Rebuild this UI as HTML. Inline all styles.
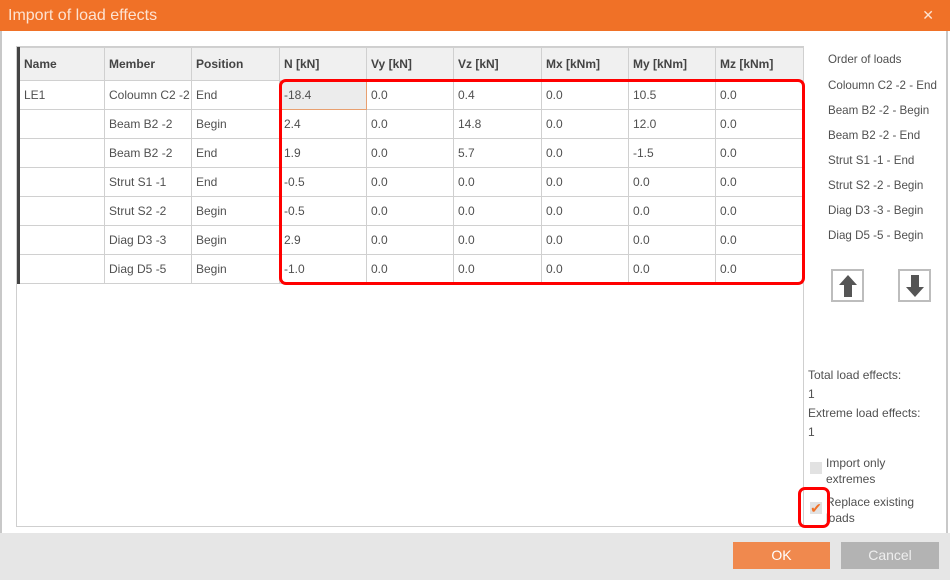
<!DOCTYPE html>
<html><head><style>
*{margin:0;padding:0;box-sizing:border-box}
body{width:950px;height:580px;position:relative;background:#fff;font-family:"Liberation Sans",sans-serif;font-size:12px;color:#505050;overflow:hidden}
.a{position:absolute}
.title{left:0;top:0;width:950px;height:31px;background:#F07127;color:#fde3d2;font-size:16px;line-height:31px;padding-left:8px}
.close{right:16px;top:7px;color:#fde3d2;font-size:14px}
.grid{left:16px;top:46px;width:788px;height:481px;border:1px solid #cfcfcf}
table{position:absolute;left:17px;top:47px;border-collapse:collapse;table-layout:fixed}
td,th{border:1px solid #d0d0d0;height:29px;padding-left:4px;text-align:left;white-space:nowrap;overflow:hidden;font-weight:normal}
th{background:#f0f0f0;font-weight:bold;height:33px;color:#444}
td.first,th.first{border-left:3px solid #444}
.sel{background:#ececec;outline:1px solid #e8a070;outline-offset:-1px}
.red{border:3px solid #f00;border-radius:7px}
.side div{position:absolute;left:828px;font-size:11.6px}
.btn{border:2px solid #bdbdbd;width:33px;height:33px;display:flex;align-items:center;justify-content:center;background:#fff}
.footer{left:0;top:533px;width:950px;height:47px;background:#e6e6e6}
</style></head><body>
<div class="a title">Import of load effects</div>
<div class="a close">✕</div>
<div class="a" style="left:0;top:31px;width:2px;height:502px;background:#c8c8c8"></div>
<div class="a" style="left:946px;top:31px;width:2px;height:502px;background:#c8c8c8"></div>
<div class="a grid"></div>
<table>
<colgroup><col style="width:86px"><col style="width:87px"><col style="width:88px"><col style="width:87px"><col style="width:87px"><col style="width:88px"><col style="width:87px"><col style="width:87px"><col style="width:88px"></colgroup>
<tr><th class="first">Name</th><th>Member</th><th>Position</th><th>N [kN]</th><th>Vy [kN]</th><th>Vz [kN]</th><th>Mx [kNm]</th><th>My [kNm]</th><th>Mz [kNm]</th></tr>
<tr><td class="first">LE1</td><td>Coloumn C2 -2</td><td>End</td><td class="sel">-18.4</td><td>0.0</td><td>0.4</td><td>0.0</td><td>10.5</td><td>0.0</td></tr>
<tr><td class="first"></td><td>Beam B2 -2</td><td>Begin</td><td>2.4</td><td>0.0</td><td>14.8</td><td>0.0</td><td>12.0</td><td>0.0</td></tr>
<tr><td class="first"></td><td>Beam B2 -2</td><td>End</td><td>1.9</td><td>0.0</td><td>5.7</td><td>0.0</td><td>-1.5</td><td>0.0</td></tr>
<tr><td class="first"></td><td>Strut S1 -1</td><td>End</td><td>-0.5</td><td>0.0</td><td>0.0</td><td>0.0</td><td>0.0</td><td>0.0</td></tr>
<tr><td class="first"></td><td>Strut S2 -2</td><td>Begin</td><td>-0.5</td><td>0.0</td><td>0.0</td><td>0.0</td><td>0.0</td><td>0.0</td></tr>
<tr><td class="first"></td><td>Diag D3 -3</td><td>Begin</td><td>2.9</td><td>0.0</td><td>0.0</td><td>0.0</td><td>0.0</td><td>0.0</td></tr>
<tr><td class="first"></td><td>Diag D5 -5</td><td>Begin</td><td>-1.0</td><td>0.0</td><td>0.0</td><td>0.0</td><td>0.0</td><td>0.0</td></tr>
</table>
<div class="a red" style="left:279px;top:79px;width:526px;height:206px"></div>
<div class="side">
<div style="top:53px">Order of loads</div>
<div style="top:79px">Coloumn C2 -2 - End</div>
<div style="top:104px">Beam B2 -2 - Begin</div>
<div style="top:129px">Beam B2 -2 - End</div>
<div style="top:154px">Strut S1 -1 - End</div>
<div style="top:179px">Strut S2 -2 - Begin</div>
<div style="top:204px">Diag D3 -3 - Begin</div>
<div style="top:229px">Diag D5 -5 - Begin</div>
</div>
<div class="a btn" style="left:831px;top:269px"><svg width="20" height="24" viewBox="0 0 20 24"><path d="M10 1 L19 11 L14 11 L14 23 L6 23 L6 11 L1 11 Z" fill="#555"/></svg></div>
<div class="a btn" style="left:898px;top:269px"><svg width="20" height="24" viewBox="0 0 20 24"><path d="M10 23 L19 13 L14 13 L14 1 L6 1 L6 13 L1 13 Z" fill="#555"/></svg></div>
<div class="a" style="left:808px;top:368px">Total load effects:</div>
<div class="a" style="left:808px;top:387px">1</div>
<div class="a" style="left:808px;top:406px">Extreme load effects:</div>
<div class="a" style="left:808px;top:425px">1</div>
<div class="a" style="left:810px;top:462px;width:12px;height:12px;background:#e2e2e2"></div>
<div class="a" style="left:826px;top:455px;line-height:16px">Import only<br>extremes</div>
<div class="a" style="left:810px;top:502px;width:12px;height:12px;background:#e2e2e2;color:#F07127;font-size:14px;line-height:12px;text-align:center">✔</div>
<div class="a" style="left:826px;top:494px;line-height:16px">Replace existing<br>loads</div>
<div class="a red" style="left:798px;top:487px;width:32px;height:41px"></div>
<div class="a footer"></div>
<div class="a" style="left:733px;top:542px;width:97px;height:27px;background:#F0894E;color:#fff;font-size:14px;line-height:27px;text-align:center">OK</div>
<div class="a" style="left:841px;top:542px;width:98px;height:27px;background:#b3b3b3;color:#eee;font-size:14px;line-height:27px;text-align:center">Cancel</div>
</body></html>
